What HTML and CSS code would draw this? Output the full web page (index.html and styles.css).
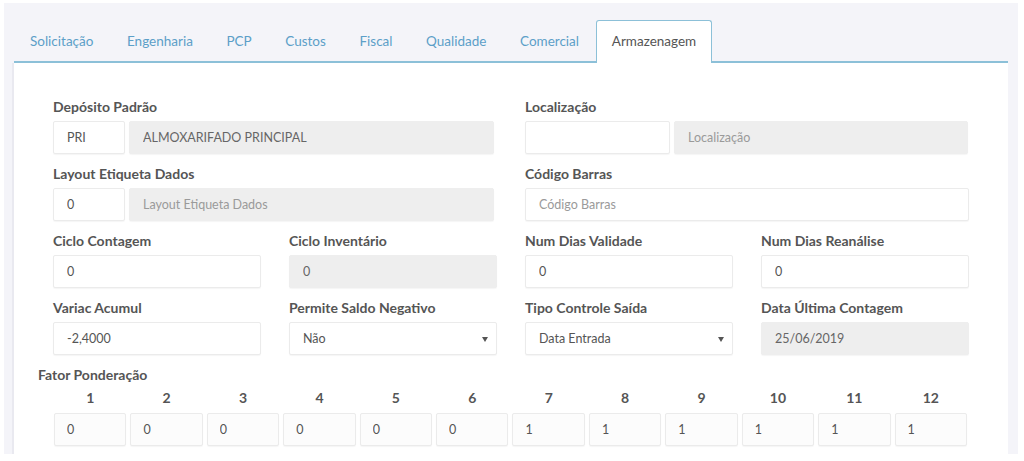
FILE: index.html
```html
<!DOCTYPE html>
<html lang="pt-BR">
<head>
    <meta charset="UTF-8">
    <meta name="viewport" content="width=device-width, initial-scale=1.0">
    <title>Armazenagem</title>
    <link rel="stylesheet" href="styles.css">
</head>
<body>
    <div class="screen">
        <ul class="tabs">
            <li>Solicitação</li>
            <li>Engenharia</li>
            <li>PCP</li>
            <li>Custos</li>
            <li>Fiscal</li>
            <li>Qualidade</li>
            <li>Comercial</li>
            <li class="active">Armazenagem</li>
        </ul>

        <div class="panel">
            <div class="form-row">
                <div class="field half">
                    <label>Depósito Padrão</label>
                    <div class="pair">
                        <input class="code" type="text" value="PRI">
                        <input class="desc" type="text" value="ALMOXARIFADO PRINCIPAL" disabled>
                    </div>
                </div>
                <div class="field half">
                    <label>Localização</label>
                    <div class="pair wide-code">
                        <input class="code" type="text" value="">
                        <input class="desc" type="text" placeholder="Localização" disabled>
                    </div>
                </div>

                <div class="field half">
                    <label>Layout Etiqueta Dados</label>
                    <div class="pair">
                        <input class="code" type="text" value="0">
                        <input class="desc" type="text" placeholder="Layout Etiqueta Dados" disabled>
                    </div>
                </div>
                <div class="field half">
                    <label>Código Barras</label>
                    <input type="text" placeholder="Código Barras">
                </div>

                <div class="field">
                    <label>Ciclo Contagem</label>
                    <input type="text" value="0">
                </div>
                <div class="field">
                    <label>Ciclo Inventário</label>
                    <input type="text" value="0" disabled>
                </div>
                <div class="field">
                    <label>Num Dias Validade</label>
                    <input type="text" value="0">
                </div>
                <div class="field">
                    <label>Num Dias Reanálise</label>
                    <input type="text" value="0">
                </div>

                <div class="field">
                    <label>Variac Acumul</label>
                    <input type="text" value="-2,4000">
                </div>
                <div class="field">
                    <label>Permite Saldo Negativo</label>
                    <div class="select">
                        <select>
                            <option>Não</option>
                            <option>Sim</option>
                        </select>
                    </div>
                </div>
                <div class="field">
                    <label>Tipo Controle Saída</label>
                    <div class="select">
                        <select>
                            <option>Data Entrada</option>
                            <option>Data Validade</option>
                        </select>
                    </div>
                </div>
                <div class="field">
                    <label>Data Última Contagem</label>
                    <input type="text" value="25/06/2019" disabled>
                </div>
            </div>

            <div class="weights">
                <label>Fator Ponderação</label>
                <div class="weights-grid">
                    <span class="num">1</span>
                    <span class="num">2</span>
                    <span class="num">3</span>
                    <span class="num">4</span>
                    <span class="num">5</span>
                    <span class="num">6</span>
                    <span class="num">7</span>
                    <span class="num">8</span>
                    <span class="num">9</span>
                    <span class="num">10</span>
                    <span class="num">11</span>
                    <span class="num">12</span>
                    <input type="text" value="0">
                    <input type="text" value="0">
                    <input type="text" value="0">
                    <input type="text" value="0">
                    <input type="text" value="0">
                    <input type="text" value="0">
                    <input type="text" value="1">
                    <input type="text" value="1">
                    <input type="text" value="1">
                    <input type="text" value="1">
                    <input type="text" value="1">
                    <input type="text" value="1">
                </div>
            </div>
        </div>
    </div>
</body>
</html>
```

FILE: styles.css
```css
body {
    margin: 0;
    padding: 0;
    background: #ffffff;
    font-family: Lato, "Open Sans", sans-serif;
    font-size: 13px;
    color: #555555;
}
.screen {
    margin: 3px 6px 0 4px;
    height: 451px;
    background: #f4f4f9;
    padding: 17px 10px 0 8px;
    box-sizing: border-box;
    overflow: hidden;
}

/* tabs */
.tabs {
    display: flex;
    list-style: none;
    margin: 0 0 0 2px;
    padding: 0;
    border-bottom: 2px solid #8cc0d8;
}
.tabs li {
    padding: 0 16.8px 0 16px;
    height: 40px;
    line-height: 42px;
    font-size: 13.5px;
    color: #5c9fc8;
    margin-bottom: -2px;
}
.tabs li + li {
    padding-left: 16.8px;
}
.tabs li.active {
    background: #ffffff;
    color: #555555;
    border: 1px solid #8cc0d8;
    border-bottom: none;
    border-radius: 3px 3px 0 0;
    padding: 0 15px;
    height: 42px;
    line-height: 41px;
}

/* panel */
.panel {
    background: #ffffff;
    border-left: 2px solid #e9e9f0;
    height: 400px;
    padding: 35px 24px 0 24px;
}
.form-row {
    display: grid;
    grid-template-columns: repeat(4, 1fr);
    column-gap: 28px;
    padding: 0 15px;
}
.field {
    margin-bottom: 11px;
}
.field.half {
    grid-column: span 2;
}
label {
    display: block;
    font-weight: bold;
    font-size: 14px;
    line-height: 18px;
    margin-bottom: 5px;
    color: #555555;
}
input, select {
    display: block;
    width: 100%;
    height: 33px;
    box-sizing: border-box;
    border: 1px solid #ebebeb;
    border-radius: 2px;
    background: #ffffff;
    box-shadow: 0 1px 1px rgba(0, 0, 0, 0.04);
    padding: 0 13px;
    font-family: inherit;
    font-size: 12.5px;
    color: #555555;
    outline: none;
}
input:disabled {
    background: #eeeeee;
    border-color: #eeeeee;
    color: #666666;
}
input::placeholder {
    color: #9a9a9a;
}
.pair {
    display: flex;
    gap: 4px;
}
.pair .code {
    width: 72px;
    flex: none;
}
.pair .desc {
    flex: 1;
    margin-right: 3px;
}
.pair.wide-code .code {
    width: 145px;
}
.pair.wide-code .desc {
    margin-right: 1px;
}
.select {
    position: relative;
}
.select select {
    appearance: none;
    -webkit-appearance: none;
}
.select::after {
    content: "";
    position: absolute;
    right: 9px;
    top: 15px;
    border-left: 3px solid transparent;
    border-right: 3px solid transparent;
    border-top: 5px solid #555555;
}

/* fator ponderacao */
.weights label {
    margin-bottom: 4px;
}
.weights-grid {
    display: grid;
    grid-template-columns: repeat(12, 1fr);
    column-gap: 4px;
    row-gap: 5px;
    padding: 0 17px 0 16px;
}
.weights-grid .num {
    text-align: center;
    font-weight: bold;
    font-size: 14px;
    line-height: 20px;
    color: #555555;
}
.weights-grid input {
    padding: 0 12px;
    background: #fcfcfc;
}
```
